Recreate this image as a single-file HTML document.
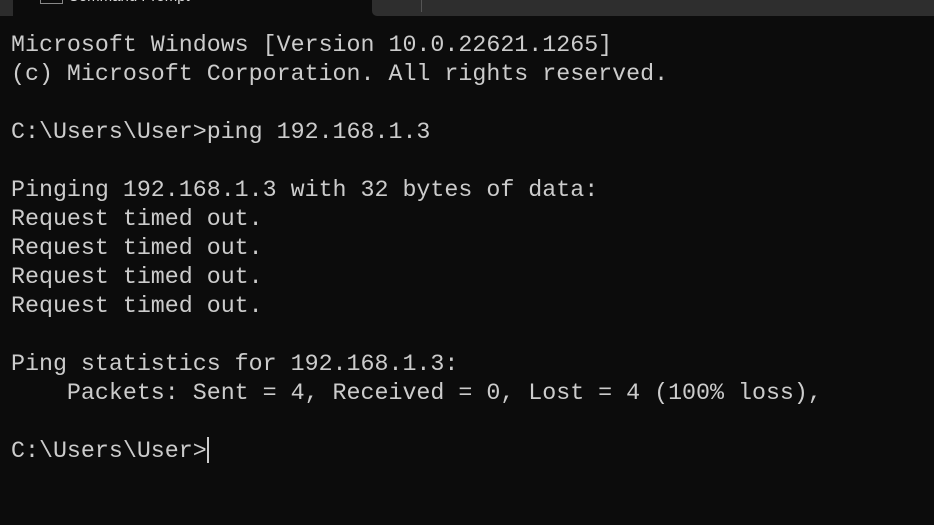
<!DOCTYPE html>
<html><head><style>
body{margin:0;width:934px;height:525px;background:#0c0c0c;overflow:hidden;position:relative}
.l{position:absolute;left:0;top:0;width:13px;height:16px;background:#2c2c2c}
.tab{position:absolute;left:13px;top:0;width:359px;height:16px;background:#0c0c0c}
.ico{position:absolute;left:27px;top:-4px;width:21px;height:7px;border:1px solid #888;border-top:none}
.tt{position:absolute;left:68px;top:-12px;font:15px "Liberation Sans",sans-serif;color:#ddd}
.r{position:absolute;left:372px;top:0;width:562px;height:16px;background:#2e2e2e;border-bottom-left-radius:5px}
.sep{position:absolute;left:421px;top:0;width:1px;height:12px;background:#555}
pre{position:absolute;left:11px;top:31px;margin:0;font:23.3px/29px "Liberation Mono",monospace;color:#cccccc}
.c{display:inline-block;width:2px;height:26px;background:#ccc;vertical-align:-6px}
</style></head><body>
<div class="l"></div><div class="tab"><div class="ico"></div></div><div class="tt">Command Prompt</div>
<div class="r"></div><div class="sep"></div>
<pre>Microsoft Windows [Version 10.0.22621.1265]
(c) Microsoft Corporation. All rights reserved.

C:\Users\User>ping 192.168.1.3

Pinging 192.168.1.3 with 32 bytes of data:
Request timed out.
Request timed out.
Request timed out.
Request timed out.

Ping statistics for 192.168.1.3:
    Packets: Sent = 4, Received = 0, Lost = 4 (100% loss),

C:\Users\User><span class="c"></span></pre>
</body></html>
